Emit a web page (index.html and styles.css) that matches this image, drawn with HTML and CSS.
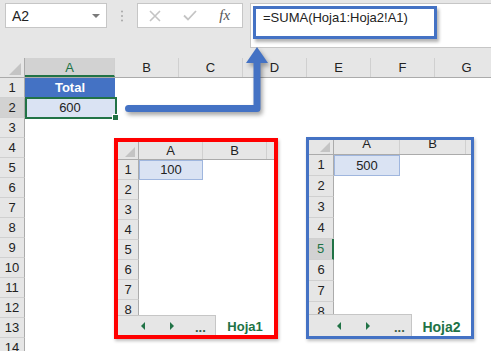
FILE: index.html
```html
<!DOCTYPE html>
<html lang="es">
<head>
    <meta charset="UTF-8">
    <title>SUMA entre hojas</title>
    <link rel="stylesheet" href="styles.css">
</head>
<body>
    <div class="app">
        <!-- barra de fórmulas -->
        <div class="toolbar">
            <div class="namebox"><span>A2</span><span class="caret"></span></div>
            <div class="grip">
                <svg width="4" height="12" viewBox="0 0 4 12"><circle cx="2" cy="1.5" r="1" fill="#a8a8a8"/><circle cx="2" cy="6" r="1" fill="#a8a8a8"/><circle cx="2" cy="10.5" r="1" fill="#a8a8a8"/></svg>
            </div>
            <div class="fx-buttons">
                <span class="fx-btn"><svg width="12" height="12" viewBox="0 0 12 12"><path d="M1 1L11 11M11 1L1 11" stroke="#c4c4c4" stroke-width="1.6"/></svg></span>
                <span class="fx-btn"><svg width="14" height="11" viewBox="0 0 14 11"><path d="M1 5.5L5 9.5L13 1" stroke="#c4c4c4" stroke-width="1.8" fill="none"/></svg></span>
                <span class="fx-btn fx">fx</span>
            </div>
            <div class="formula">
                <span>=SUMA(Hoja1:Hoja2!A1)</span>
                <div class="formula-mark"></div>
            </div>
        </div>

        <!-- hoja principal -->
        <div class="sheet">
            <div class="colheads">
                <div class="corner"><span class="tri"></span></div>
                <div class="ch w-a active">A</div>
                <div class="ch">B</div>
                <div class="ch">C</div>
                <div class="ch">D</div>
                <div class="ch">E</div>
                <div class="ch">F</div>
                <div class="ch">G</div>
            </div>
            <div class="row"><div class="rh">1</div><div class="cell head-cell">Total</div></div>
            <div class="row"><div class="rh sel-rh">2</div><div class="cell val-cell sel">600</div></div>
            <div class="row"><div class="rh">3</div></div>
            <div class="row"><div class="rh">4</div></div>
            <div class="row"><div class="rh">5</div></div>
            <div class="row"><div class="rh">6</div></div>
            <div class="row"><div class="rh">7</div></div>
            <div class="row"><div class="rh">8</div></div>
            <div class="row"><div class="rh">9</div></div>
            <div class="row"><div class="rh">10</div></div>
            <div class="row"><div class="rh">11</div></div>
            <div class="row"><div class="rh">12</div></div>
            <div class="row"><div class="rh">13</div></div>
            <div class="row"><div class="rh">14</div></div>
        </div>

        <!-- flecha -->
        <svg class="arrow" width="491" height="351" viewBox="0 0 491 351">
            <path d="M128.5 108.5H257V60" stroke="#4472c4" stroke-width="7" fill="none" stroke-linecap="round" stroke-linejoin="round"/>
            <polygon points="246,63 257,47 268,63" fill="#4472c4"/>
        </svg>

        <!-- Hoja1 -->
        <div class="peek peek-red">
            <div class="peek-head">
                <div class="pc"><span class="tri small"></span></div>
                <div class="ph">A</div>
                <div class="ph">B</div>
                <div class="ph rest"></div>
            </div>
            <div class="peek-body">
                <div class="peek-row"><div class="prh">1</div><div class="pcell val">100</div></div>
                <div class="peek-row"><div class="prh">2</div></div>
                <div class="peek-row"><div class="prh">3</div></div>
                <div class="peek-row"><div class="prh">4</div></div>
                <div class="peek-row"><div class="prh">5</div></div>
                <div class="peek-row"><div class="prh">6</div></div>
                <div class="peek-row"><div class="prh">7</div></div>
                <div class="peek-row"><div class="prh">8</div></div>
            </div>
            <div class="peek-tabs">
                <div class="peek-nav"><span class="nav-l"></span><span class="nav-r"></span><span class="dots">...</span></div>
                <div class="peek-tab">Hoja1</div>
            </div>
        </div>

        <!-- Hoja2 -->
        <div class="peek peek-blue">
            <div class="peek-head">
                <div class="pc"><span class="tri small"></span></div>
                <div class="ph">A</div>
                <div class="ph">B</div>
                <div class="ph rest"></div>
            </div>
            <div class="peek-body">
                <div class="peek-row"><div class="prh">1</div><div class="pcell val">500</div></div>
                <div class="peek-row"><div class="prh">2</div></div>
                <div class="peek-row"><div class="prh">3</div></div>
                <div class="peek-row"><div class="prh">4</div></div>
                <div class="peek-row"><div class="prh sel-prh">5</div></div>
                <div class="peek-row"><div class="prh">6</div></div>
                <div class="peek-row"><div class="prh">7</div></div>
                <div class="peek-row"><div class="prh">8</div></div>
            </div>
            <div class="peek-tabs">
                <div class="peek-nav"><span class="nav-l"></span><span class="nav-r"></span><span class="dots">...</span></div>
                <div class="peek-tab">Hoja2</div>
            </div>
        </div>
    </div>
</body>
</html>
```

FILE: styles.css
```css
/* === BASE === */
body {
    margin: 0;
    padding: 0;
    font-family: 'Liberation Sans', Arial, sans-serif;
    background-color: #fff;
    color: #222;
    overflow: hidden;
}

.app {
    position: relative;
    width: 491px;
    height: 351px;
    overflow: hidden;
}

/* === BARRA DE FÓRMULAS === */
.toolbar {
    height: 58px;
    box-sizing: border-box;
    padding: 3px 0 0 5px;
    background-color: #e6e6e6;
    display: flex;
    align-items: flex-start;
}

.namebox {
    width: 102px;
    height: 25px;
    box-sizing: border-box;
    background-color: #fff;
    border: 1px solid #c6c6c6;
    display: flex;
    align-items: center;
    justify-content: space-between;
    padding: 0 6px 0 6px;
    font-size: 14px;
}

.caret {
    width: 0;
    height: 0;
    border-left: 4px solid transparent;
    border-right: 4px solid transparent;
    border-top: 4px solid #7a7a7a;
}

.grip {
    width: 30px;
    height: 25px;
    display: flex;
    align-items: center;
    justify-content: center;
}

.fx-buttons {
    width: 106px;
    height: 25px;
    box-sizing: border-box;
    background-color: #fff;
    border: 1px solid #c6c6c6;
    display: flex;
    align-items: center;
}

.fx-btn {
    width: 36px;
    display: flex;
    justify-content: center;
    align-items: center;
}

.fx {
    font-family: 'Liberation Serif', 'Times New Roman', serif;
    font-style: italic;
    font-size: 15px;
    color: #555;
}

.formula {
    position: relative;
    flex: 1;
    margin-left: 7px;
    height: 45px;
    box-sizing: border-box;
    background-color: #fff;
    border: 1px solid #c6c6c6;
    border-right: none;
    padding: 5px 0 0 12px;
    font-size: 13px;
    line-height: 18px;
    color: #222;
}

/* recuadro azul sobre la fórmula */
.formula-mark {
    position: absolute;
    left: 2px;
    top: 2px;
    width: 184px;
    height: 33px;
    box-sizing: border-box;
    border: 3px solid #4472c4;
    box-shadow: 2px 3px 3px rgba(0, 0, 0, 0.3);
}

/* === HOJA PRINCIPAL === */
.colheads {
    display: flex;
    height: 20px;
    box-sizing: border-box;
    background-color: #e6e6e6;
    border-bottom: 1px solid #ababab;
}

.corner {
    width: 25px;
    flex: none;
    box-sizing: border-box;
    border-right: 1px solid #ababab;
    display: flex;
    align-items: flex-end;
    justify-content: flex-end;
}

.tri {
    width: 0;
    height: 0;
    margin: 0 3px 2px 0;
    border-left: 12px solid transparent;
    border-bottom: 12px solid #c4c4c4;
}

.tri.small {
    border-left-width: 10px;
    border-bottom-width: 10px;
}

.ch {
    width: 64px;
    flex: none;
    box-sizing: border-box;
    border-right: 1px solid #d0d0d0;
    text-align: center;
    font-size: 13px;
    line-height: 19px;
}

.ch.w-a {
    width: 90px;
}

.ch.active {
    background-color: #d2d2d2;
    color: #217346;
    border-bottom: 2px solid #217346;
}

.row {
    display: flex;
    height: 20px;
}

.rh {
    width: 25px;
    flex: none;
    box-sizing: border-box;
    background-color: #e6e6e6;
    border-right: 1px solid #ababab;
    border-bottom: 1px solid #d0d0d0;
    text-align: center;
    font-size: 13px;
    line-height: 19px;
}

.rh.sel-rh {
    background-color: #d2d2d2;
}

.cell {
    width: 90px;
    text-align: center;
    font-size: 13px;
    line-height: 20px;
}

.head-cell {
    background-color: #4472c4;
    color: #fff;
    font-weight: bold;
}

.val-cell {
    background-color: #dae3f3;
}

.sel {
    position: relative;
}

.sel::after {
    content: "";
    position: absolute;
    left: 0;
    top: -1px;
    right: -2px;
    bottom: -1px;
    border: 2px solid #217346;
}

.sel::before {
    content: "";
    position: absolute;
    right: -4px;
    bottom: -3px;
    width: 5px;
    height: 5px;
    background-color: #217346;
    border: 1px solid #fff;
    z-index: 1;
}

/* === FLECHA === */
.arrow {
    position: absolute;
    left: 0;
    top: 0;
    pointer-events: none;
    filter: drop-shadow(2px 3px 2px rgba(0, 0, 0, 0.35));
}

/* === VISTAS DE HOJA1 / HOJA2 === */
.peek {
    position: absolute;
    box-sizing: border-box;
    background-color: #fff;
    display: flex;
    flex-direction: column;
    overflow: hidden;
    box-shadow: 1px 2px 3px rgba(0, 0, 0, 0.25);
}

.peek-red {
    left: 114px;
    top: 138px;
    width: 164px;
    height: 201px;
    border: 4px solid #ff0000;
}

.peek-blue {
    left: 306px;
    top: 137px;
    width: 168px;
    height: 202px;
    border: 3px solid #4472c4;
}

.peek-head {
    display: flex;
    flex: none;
    height: 18px;
    box-sizing: border-box;
    background-color: #e6e6e6;
    border-bottom: 1px solid #ababab;
    overflow: hidden;
}

.peek-blue .peek-head {
    height: 15px;
    align-items: flex-end;
}

.pc {
    width: 21px;
    flex: none;
    box-sizing: border-box;
    border-right: 1px solid #ababab;
    display: flex;
    align-items: flex-end;
    justify-content: flex-end;
}

.ph {
    width: 64px;
    flex: none;
    box-sizing: border-box;
    border-right: 1px solid #d0d0d0;
    text-align: center;
    font-size: 13px;
    line-height: 17px;
}

.ph.rest {
    flex: 1;
    border-right: none;
}

.peek-blue .pc {
    width: 25px;
    height: 15px;
}

.peek-blue .ph {
    width: 66px;
    height: 20px;
    line-height: 19px;
}

.peek-body {
    flex: 1;
    overflow: hidden;
}

.peek-row {
    display: flex;
    height: 20px;
}

.peek-blue .peek-row {
    height: 21px;
}

.prh {
    width: 21px;
    flex: none;
    box-sizing: border-box;
    background-color: #e6e6e6;
    border-right: 1px solid #ababab;
    border-bottom: 1px solid #d0d0d0;
    text-align: center;
    font-size: 13px;
    line-height: 19px;
}

.peek-blue .prh {
    width: 25px;
    line-height: 20px;
}

.prh.sel-prh {
    background-color: #d2d2d2;
    color: #217346;
    border-right: 2px solid #217346;
}

.pcell {
    width: 64px;
    box-sizing: border-box;
    text-align: center;
    font-size: 13px;
    line-height: 18px;
}

.peek-blue .pcell {
    width: 66px;
    line-height: 19px;
}

.pcell.val {
    background-color: #dae3f3;
    border: 1px solid #9fb6de;
}

/* pestañas */
.peek-tabs {
    display: flex;
    flex: none;
    height: 20px;
    background-color: #e6e6e6;
}

.peek-blue .peek-tabs {
    height: 22px;
}

.peek-nav {
    flex: 1;
    display: flex;
    align-items: center;
    box-sizing: border-box;
    border-top: 1px solid #c6c6c6;
    border-right: 1px solid #c6c6c6;
    padding-left: 23px;
}

.peek-blue .peek-nav {
    padding-left: 28px;
}

.nav-l {
    width: 0;
    height: 0;
    border-top: 4px solid transparent;
    border-bottom: 4px solid transparent;
    border-right: 4px solid #217346;
}

.nav-r {
    width: 0;
    height: 0;
    margin-left: 25px;
    border-top: 4px solid transparent;
    border-bottom: 4px solid transparent;
    border-left: 4px solid #217346;
}

.dots {
    margin-left: 21px;
    font-size: 13px;
    font-weight: bold;
    color: #3b5e45;
    padding-top: 4px;
}

.peek-blue .dots {
    margin-left: 24px;
}

.peek-tab {
    width: 58px;
    flex: none;
    background-color: #fff;
    color: #217346;
    font-weight: bold;
    font-size: 13px;
    text-align: center;
    line-height: 20px;
    padding-top: 2px;
    box-sizing: border-box;
}

.peek-blue .peek-tab {
    width: 59px;
    font-size: 14px;
    line-height: 22px;
}
```
